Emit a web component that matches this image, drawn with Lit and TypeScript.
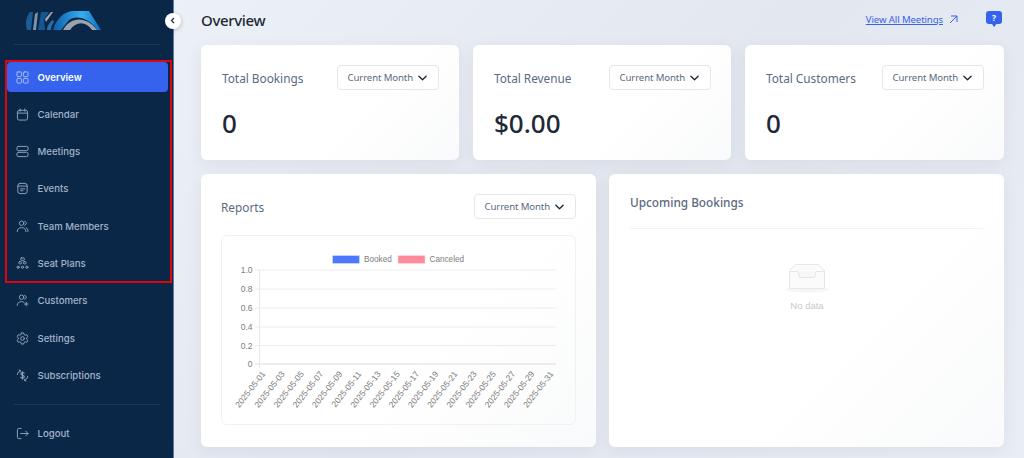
import { LitElement, html, css, svg } from "lit";
import { customElement } from "lit/decorators.js";

const ic = (body: unknown) => html`<svg class="ic" viewBox="0 0 14 14" fill="none" stroke="currentColor" stroke-width="1.05" stroke-linecap="round" stroke-linejoin="round">${body}</svg>`;

const NAV: [string, unknown][] = [
  ["Calendar", svg`<rect x="1.5" y="2.5" width="11" height="10.500" rx="2"/><path d="M1.5 5.5h11M4.5 1v2.5M9.5 1v2.5"/>`],
  ["Meetings", svg`<rect x="1" y="1.5" width="12" height="4.600" rx="1.600"/><rect x="1" y="7.900" width="12" height="4.600" rx="1.600"/>`],
  ["Events", svg`<rect x="2" y="1.500" width="10" height="11" rx="2.400"/><path d="M2 4.400h10M5 7.400h4.500M5 9.400h2.500"/>`],
  ["Team Members", svg`<circle cx="6" cy="3.500" r="2.400"/><path d="M1.300 12.500c0-3 2-4.300 4.700-4.300s4.700 1.300 4.700 4.300M9.300 1.400c1.300.3 1.800 1.200 1.800 2.100s-.5 1.800-1.800 2.100M11 8.400c1.300.5 1.900 2 1.900 4"/>`],
  ["Seat Plans", svg`<rect x="5" y="1" width="4" height="2.600" rx=".8"/><rect x="3" y="5" width="3" height="2.400" rx=".8"/><rect x="8" y="5" width="3" height="2.400" rx=".8"/><circle cx="2.300" cy="11" r="1.200"/><circle cx="7" cy="11" r="1.200"/><circle cx="11.700" cy="11" r="1.200"/>`],
  ["Customers", svg`<circle cx="6" cy="3.500" r="2.400"/><path d="M1.300 12.300c0-2.800 2-4.100 4.700-4.100 1 0 1.900.2 2.600.6M9.300 1.400c1.200.3 1.700 1.200 1.700 2.100s-.5 1.800-1.700 2.100M11 8.800v4M9 10.800h4"/>`],
  ["Settings", svg`<circle cx="7" cy="7" r="2"/><path d="M5.800 1h2.400l.4 1.700 1.300.7 1.700-.5 1.200 2.100-1.300 1.200v1.600l1.300 1.200-1.200 2.100-1.700-.5-1.300.7L8.200 13H5.800l-.4-1.700-1.300-.7-1.700.5L1.200 9l1.300-1.200V6.200L1.200 5l1.200-2.100 1.700.5 1.300-.7z"/>`],
  ["Subscriptions", svg`<path d="M1.500 6C1.700 3.800 3 2.300 4.800 1.700M3.300 1.200l1.600.5-.6 1.500M12.500 8c-.2 2.200-1.500 3.700-3.300 4.300M10.700 12.800l-1.600-.5.6-1.500"/><path stroke-width="1.200" d="M8.800 4.600C8.400 4 7.800 3.800 7 3.800c-1 0-1.700.5-1.700 1.400C5.300 7.200 8.900 6.300 8.900 8.400c0 .9-.8 1.500-1.900 1.500-.8 0-1.500-.3-1.900-1M7 2.900v8"/>`],
];

const YL: [string, number][] = [["1.0", 270], ["0.8", 289], ["0.6", 308], ["0.4", 327], ["0.2", 345.5], ["0", 364]];
const days = Array.from({ length: 16 }, (_, i) => `2025-05-${String(i * 2 + 1).padStart(2, "0")}`);

const chevron = html`<svg class="chev" viewBox="0 0 10 6" fill="none" stroke="#1f2937" stroke-width="1.500" stroke-linecap="round" stroke-linejoin="round"><path d="M1 1l4 4 4-4"/></svg>`;
const select = html`<div class="select"><span>Current Month</span>${chevron}</div>`;

@customElement("app-root")
export class AppRoot extends LitElement {
  static styles = css`
    :host { display: block; width: 1024px; height: 458px; overflow: hidden; position: relative; font-family: "Noto Sans", sans-serif; }
    .page { display: flex; width: 1024px; height: 458px; background: linear-gradient(135deg, #eef2f9 0%, #e3e7ef 55%, #e9edf5 100%); }
    .side { width: 174px; flex: none; box-sizing: border-box; background: #0b2748; border-right: 1px solid #5f7ba0; font-family: Inter, sans-serif; font-size: 9.6px; font-weight: 500; color: #a3b4cb; display: flex; flex-direction: column; height: 458px; }
    .logo { height: 45px; box-sizing: border-box; margin: 0 13px 0 14px; border-bottom: 1px solid #1e3858; }
    .logo svg { display: block; margin-left: 12px; margin-top: 11px; }
    .nav { padding: 17px 5px 0 7px; display: flex; flex-direction: column; gap: 7.3px; }
    .item { height: 30px; display: flex; align-items: center; gap: 8.5px; padding-left: 9px; border-radius: 4px; }
    .item.on { background: #3563ee; color: #fff; font-weight: 600; }
    .ic { width: 13px; height: 13px; flex: none; color: #8fa2bb; }
    .on .ic { color: #a9bdf6; }
    .rule { height: 1px; background: #1e3858; margin: 14px 13px 13px 14px; }
    .nav.foot { padding-top: 0; }
    .main { flex: 1; min-width: 0; box-sizing: border-box; padding: 0 20px 11px 27px; display: flex; flex-direction: column; }
    .head { height: 45px; display: flex; align-items: flex-start; justify-content: space-between; }
    h1 { margin: 10px 0 0; font-size: 15px; letter-spacing: -.35px; line-height: 21px; font-weight: 500; color: #1f2937; }
    .links { display: flex; align-items: center; margin-top: 10px; }
    .link { color: #3563ee; font-size: 9.6px; letter-spacing: -.1px; text-decoration: underline; }
    .arrow { width: 9px; height: 9px; margin-left: 6px; margin-right: 27px; }
    .help { display: block; width: 18px; height: 18px; margin-right: 1px; }
    .row1 { display: grid; grid-template-columns: 258px 258px 259px; gap: 14px; }
    .card { background: linear-gradient(135deg, #fff 60%, #f9fafb 100%); border-radius: 6px; box-sizing: border-box; box-shadow: 0 4px 14px rgba(120, 135, 160, .12); }
    .stat { height: 115px; padding: 20px 20px 0 21px; }
    .top { display: flex; align-items: center; justify-content: space-between; }
    .label { font-size: 11.8px; color: #5a6a82; font-weight: 400; }
    .select { height: 25px; width: 102.5px; box-sizing: border-box; border: 1px solid #e5e7eb; border-radius: 4px; background: #fff; display: flex; align-items: center; justify-content: space-between; padding: 0 11px 0 10px; font-size: 9.6px; letter-spacing: -.1px; color: #5a6a82; }
    .chev { width: 9px; height: 6px; }
    .num { font-size: 26px; line-height: 36px; font-weight: 500; color: #1f2937; margin-top: 15px; }
    .row2 { display: grid; grid-template-columns: 395px 395px; gap: 13px; margin-top: 14px; flex: 1; }
    .reports { padding: 20px 20px 21px; display: flex; flex-direction: column; }
    .reports .top { height: 25px; }
    .chart { margin-top: 16px; height: 190px; box-sizing: border-box; border: 1px solid #f0f1f3; border-radius: 6px; overflow: hidden; }
    .chart svg { display: block; }
    .chart text { font-family: "Liberation Sans", Arial, sans-serif; fill: #7c7c7c; font-size: 8.5px; }
    .chart .legend { font-size: 8.2px; }
    .up { padding: 19px 20px 0 21px; }
    .up .label { font-weight: 500; line-height: 19px; display: block; }
    .sep { height: 1px; background: #f0f2f5; margin-top: 16px; }
    .empty { display: flex; flex-direction: column; align-items: center; margin-top: 35px; gap: 6.5px; font-family: "Liberation Sans", Arial, sans-serif; font-size: 9.5px; color: #c9c9c9; }
    .mark { position: absolute; left: 5px; top: 60px; width: 167px; height: 223px; box-sizing: border-box; border: 2px solid #e0060c; pointer-events: none; }
    .toggle { position: absolute; left: 164.5px; top: 12.5px; width: 16px; height: 16px; border-radius: 50%; background: #fff; box-shadow: 0 1px 4px rgba(30, 50, 80, .3); display: flex; align-items: center; justify-content: center; }
    .toggle svg { width: 5px; height: 7px; }
  `;

  private chart() {
    return html`<svg width="353" height="188" viewBox="222 236 353 188">
      <rect x="332.5" y="255.5" width="27" height="8" fill="#4c78fb" stroke="#dfe6fb" stroke-width=".5"/>
      <text class="legend" x="364" y="262">Booked</text>
      <rect x="398" y="255.5" width="27" height="8" fill="#fe8a9c" stroke="#fde3e7" stroke-width=".5"/>
      <text class="legend" x="429.5" y="262">Canceled</text>
      ${YL.map(([l, y]) => svg`
        <line x1="255" x2="556" y1=${y} y2=${y} stroke=${y === 364 ? "#dcdcdc" : "#ececec"}/>
        <text x="252.5" y=${y + 3} text-anchor="end">${l}</text>`)}
      <line x1="259.5" x2="259.5" y1="270" y2="368" stroke="#e6e6e6"/>
      ${days.map((d, i) => svg`<text text-anchor="end" transform="translate(${266 + i * 19.2} 374) rotate(-52)">${d}</text>`)}
    </svg>`;
  }

  render() {
    return html`
      <div class="page">
        <aside class="side">
          <div class="logo">
            <svg width="76" height="20" viewBox="0 0 76 20">
              <defs><linearGradient id="lg" x1="0" x2="1" y1="0" y2="0"><stop offset="0" stop-color="#0f5ea8"/><stop offset=".6" stop-color="#35aef2"/><stop offset="1" stop-color="#0f6cb8"/></linearGradient></defs>
              <path d="M1 19C-1 12 0 6 4 1h3L5 19z" fill="#1b5d93"/>
              <path d="M7 19L9 3l3-2-2 18z" fill="#7f93a6"/>
              <path d="M12 19l3-18h8l-5 8 1 10z" fill="#14568f"/>
              <path d="M19 8l6-7h2l-7 10z" fill="#9aa8b5"/>
              <path d="M21 19c0-4 3-8 6-10l1 2c-2 2-3 5-3 8z" fill="#2a6ea8"/>
              <path d="M27 19C30 8 38 0 48 0h15l12 19h-4C65 8 50 3 43 9l-8 10z" fill="url(#lg)"/>
              <path d="M37 19C44 6 60 4 71 19h-5C60 10 50 10 44 19z" fill="#9aa3ad"/>
            </svg>
          </div>
          <nav class="nav">
            <div class="item on">${ic(svg`<rect x="1" y="1" width="5" height="5" rx="1"/><rect x="8" y="1" width="5" height="5" rx="1"/><rect x="1" y="8" width="5" height="5" rx="1"/><rect x="8" y="8" width="5" height="5" rx="1"/>`)}<span>Overview</span></div>
            ${NAV.map(([n, p]) => html`<div class="item">${ic(p)}<span>${n}</span></div>`)}
          </nav>
          <div class="rule"></div>
          <div class="nav foot">
            <div class="item">${ic(svg`<path d="M5.5 1.5H3A1.500 1.500 0 0 0 1.5 3v8A1.500 1.500 0 0 0 3 12.5h2.500M5 7h8M10.500 4.500L13 7l-2.500 2.500"/>`)}<span>Logout</span></div>
          </div>
        </aside>
        <main class="main">
          <header class="head">
            <h1>Overview</h1>
            <div class="links">
              <span class="link">View All Meetings</span>
              <svg class="arrow" viewBox="0 0 9 9" fill="none" stroke="#3563ee" stroke-width="1"><path d="M1 8l7-7M2 1h6v6"/></svg>
              <svg class="help" viewBox="0 0 18 18"><path d="M4 1h10a3 3 0 0 1 3 3v7a3 3 0 0 1-3 3h-2.500L9 17l-2-3H4a3 3 0 0 1-3-3V4a3 3 0 0 1 3-3z" fill="#3563ee"/><text x="9" y="10.500" text-anchor="middle" font-size="8.500" font-weight="700" fill="#fff" font-family="Noto Sans">?</text></svg>
            </div>
          </header>
          <section class="row1">
            ${[["Total Bookings", "0"], ["Total Revenue", "$0.00"], ["Total Customers", "0"]].map(([l, v]) => html`
              <div class="card stat">
                <div class="top"><span class="label">${l}</span>${select}</div>
                <div class="num">${v}</div>
              </div>`)}
          </section>
          <section class="row2">
            <div class="card reports">
              <div class="top"><span class="label">Reports</span>${select}</div>
              <div class="chart">${this.chart()}</div>
            </div>
            <div class="card up">
              <span class="label">Upcoming Bookings</span>
              <div class="sep"></div>
              <div class="empty">
                <svg width="44" height="29" viewBox="0 0 44 29" fill="none">
                  <ellipse cx="22" cy="25.500" rx="22" ry="3" fill="#f6f6f6"/>
                  <path d="M4.500 6.500L11 .5h22l6.500 6v17a1 1 0 0 1-1 1h-33a1 1 0 0 1-1-1z" fill="#fbfbfb" stroke="#e6e6e6"/>
                  <path d="M4.500 7.500H13l1.500 6h15l1.500-6h8.500" stroke="#e6e6e6" fill="#f7f7f7"/>
                </svg>
                <span>No data</span>
              </div>
            </div>
          </section>
        </main>
      </div>
      <div class="toggle"><svg viewBox="0 0 5 7" fill="none" stroke="#1f2937" stroke-width="1.200"><path d="M4 1L1.500 3.500 4 6"/></svg></div>
      <div class="mark"></div>
    `;
  }
}
